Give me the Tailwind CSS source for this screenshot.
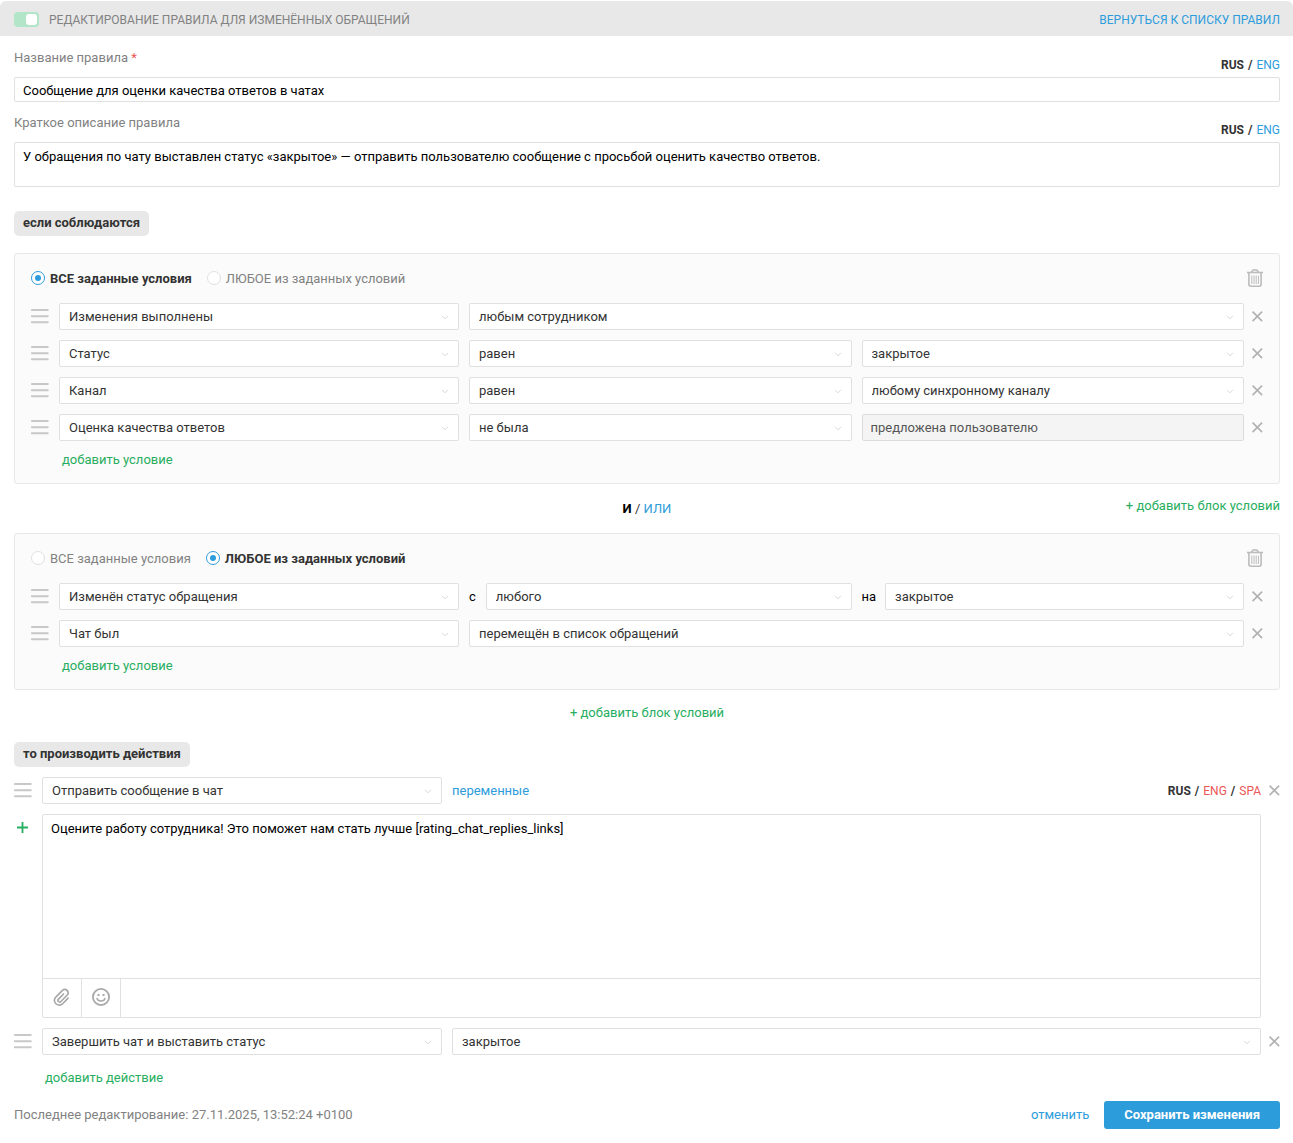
<!DOCTYPE html>
<html lang="ru">
<head>
<meta charset="utf-8">
<meta name="viewport" content="width=device-width, initial-scale=1">
<title>Редактирование правила</title>
<script src="https://cdn.jsdelivr.net/npm/@tailwindcss/browser@4"></script>
</head>
<body class="bg-white font-[Roboto,sans-serif] text-[13px] leading-5 text-[#333]">

<svg class="hidden" aria-hidden="true">
  <symbol id="drag" viewBox="0 0 18 16"><path d="M.8 2h16M.8 8.200h16M.8 14.200h16" stroke="#c8c8c8" stroke-width="1.900" stroke-linecap="round"/></symbol>
  <symbol id="chevron" viewBox="0 0 8 5"><path d="M1 .8 4 3.800 7 .8" fill="none" stroke="#d4d7dc" stroke-width="1"/></symbol>
  <symbol id="close" viewBox="0 0 11 11"><path d="M.6.600l9.500 9.500M10.100.6.6 10.100" stroke="#b3b3b3" stroke-width="1.700"/></symbol>
  <symbol id="trash" viewBox="0 0 16 18"><g fill="none" stroke="#bcbcbc"><path d="M0 3.500h16" stroke-width="1.600"/><path d="M4.800 3.200C5 1.500 6 .8 8 .8s3 .7 3.200 2.400" stroke-width="1.500"/><path d="M1.900 4v11.300q0 1.900 1.900 1.900h8.400q1.900 0 1.900-1.900V4" stroke-width="1.600"/><path d="M4.800 6.500v8.500M7 6.500v8.500M9.200 6.500v8.500M11.400 6.500v8.500" stroke-width="1"/></g></symbol>
</svg>

<header class="mt-px flex h-[35px] items-center rounded-t-md bg-[#e8e8e8] pt-[2px] pr-[13px] pl-[14px]">
  <label class="flex items-center gap-[10px] text-[12px] text-[#828282] uppercase">
    <input type="checkbox" checked class="flex h-[15px] w-[25px] appearance-none items-center rounded-[4px] bg-[#b3e6c8] px-[2px] before:size-[11px] before:rounded-[3px] before:bg-white checked:justify-end">
    Редактирование правила для изменённых обращений
  </label>
  <a href="#" class="ml-auto text-[12px] text-[#2d9cdb] uppercase">Вернуться к списку правил</a>
</header>

<form class="pr-[13px] pb-[14px] pl-[14px]">
  <div class="flex h-[41px] items-end justify-between">
    <label for="name" class="mb-[9px] text-[#828282]">Название правила <span class="text-[#eb5757]">*</span></label>
    <div class="mb-[2px] flex gap-1 text-[12px]"><b>RUS</b><b>/</b><a href="#" class="text-[#2d9cdb]">ENG</a></div>
  </div>
  <input id="name" type="text" value="Сообщение для оценки качества ответов в чатах" class="block h-[25px] w-full rounded-[2px] border border-[#e0e0e0] px-2 pt-[2px] text-black">
  <div class="flex h-10 items-end justify-between">
    <label for="about" class="mb-[9px] text-[#828282]">Краткое описание правила</label>
    <div class="mb-[2px] flex gap-1 text-[12px]"><b>RUS</b><b>/</b><a href="#" class="text-[#2d9cdb]">ENG</a></div>
  </div>
  <textarea id="about" class="block h-[45px] w-full resize-none overflow-hidden rounded-[2px] border border-[#e0e0e0] px-2 py-1 text-black">У обращения по чату выставлен статус «закрытое» — отправить пользователю сообщение с просьбой оценить качество ответов.</textarea>

  <h2 class="mt-6 flex h-[25px] w-fit items-center rounded-[5px] bg-[#e8e8e8] px-[9px] pb-[2px] font-bold">если соблюдаются</h2>

  <!-- Первый блок условий -->
  <section class="mt-[17px] rounded-[3px] border border-[#e8e8e8] bg-[#fbfbfb] px-4 pt-[15px] pb-[13px]">
    <div class="flex h-[18px] items-center gap-[15px] text-[#828282]">
      <label class="flex items-center gap-[5px] has-checked:font-bold has-checked:text-[#333]"><input type="radio" name="group1" checked class="flex size-[14px] appearance-none items-center justify-center rounded-full border border-[#e0e0e0] bg-white before:size-[6px] before:rounded-full checked:border-[#2d9cdb] checked:before:bg-[#2d9cdb]"><span class="pt-[2px]">ВСЕ заданные условия</span></label>
      <label class="flex items-center gap-[5px] has-checked:font-bold has-checked:text-[#333]"><input type="radio" name="group1" class="flex size-[14px] appearance-none items-center justify-center rounded-full border border-[#e0e0e0] bg-white before:size-[6px] before:rounded-full checked:border-[#2d9cdb] checked:before:bg-[#2d9cdb]"><span class="pt-[2px]">ЛЮБОЕ из заданных условий</span></label>
      <button type="button" aria-label="Удалить блок" class="ml-auto"><svg class="h-[18px] w-4"><use href="#trash"/></svg></button>
    </div>
    <div class="mt-4 flex flex-col gap-[10px]">
      <div class="flex items-center">
        <svg class="mr-[10px] mb-px h-4 w-[18px] shrink-0"><use href="#drag"/></svg>
        <div class="grid w-[400px] shrink-0 items-center"><select aria-label="Условие" class="col-start-1 row-start-1 h-[27px] w-full appearance-none rounded-[2px] border border-[#e0e0e0] bg-white px-[9px]"><option>Изменения выполнены</option></select><svg class="pointer-events-none col-start-1 row-start-1 mt-[2px] mr-[10px] h-[5px] w-2 justify-self-end"><use href="#chevron"/></svg></div>
        <div class="ml-[10px] grid flex-1 items-center"><select aria-label="Значение" class="col-start-1 row-start-1 h-[27px] w-full appearance-none rounded-[2px] border border-[#e0e0e0] bg-white px-[9px]"><option>любым сотрудником</option></select><svg class="pointer-events-none col-start-1 row-start-1 mt-[2px] mr-[10px] h-[5px] w-2 justify-self-end"><use href="#chevron"/></svg></div>
        <button type="button" aria-label="Удалить" class="ml-2"><svg class="size-[11px]"><use href="#close"/></svg></button>
      </div>
      <div class="flex items-center">
        <svg class="mr-[10px] mb-px h-4 w-[18px] shrink-0"><use href="#drag"/></svg>
        <div class="grid w-[400px] shrink-0 items-center"><select aria-label="Условие" class="col-start-1 row-start-1 h-[27px] w-full appearance-none rounded-[2px] border border-[#e0e0e0] bg-white px-[9px]"><option>Статус</option></select><svg class="pointer-events-none col-start-1 row-start-1 mt-[2px] mr-[10px] h-[5px] w-2 justify-self-end"><use href="#chevron"/></svg></div>
        <div class="ml-[10px] grid flex-1 items-center"><select aria-label="Сравнение" class="col-start-1 row-start-1 h-[27px] w-full appearance-none rounded-[2px] border border-[#e0e0e0] bg-white px-[9px]"><option>равен</option></select><svg class="pointer-events-none col-start-1 row-start-1 mt-[2px] mr-[10px] h-[5px] w-2 justify-self-end"><use href="#chevron"/></svg></div>
        <div class="ml-[10px] grid flex-1 items-center"><select aria-label="Значение" class="col-start-1 row-start-1 h-[27px] w-full appearance-none rounded-[2px] border border-[#e0e0e0] bg-white px-[9px]"><option>закрытое</option></select><svg class="pointer-events-none col-start-1 row-start-1 mt-[2px] mr-[10px] h-[5px] w-2 justify-self-end"><use href="#chevron"/></svg></div>
        <button type="button" aria-label="Удалить" class="ml-2"><svg class="size-[11px]"><use href="#close"/></svg></button>
      </div>
      <div class="flex items-center">
        <svg class="mr-[10px] mb-px h-4 w-[18px] shrink-0"><use href="#drag"/></svg>
        <div class="grid w-[400px] shrink-0 items-center"><select aria-label="Условие" class="col-start-1 row-start-1 h-[27px] w-full appearance-none rounded-[2px] border border-[#e0e0e0] bg-white px-[9px]"><option>Канал</option></select><svg class="pointer-events-none col-start-1 row-start-1 mt-[2px] mr-[10px] h-[5px] w-2 justify-self-end"><use href="#chevron"/></svg></div>
        <div class="ml-[10px] grid flex-1 items-center"><select aria-label="Сравнение" class="col-start-1 row-start-1 h-[27px] w-full appearance-none rounded-[2px] border border-[#e0e0e0] bg-white px-[9px]"><option>равен</option></select><svg class="pointer-events-none col-start-1 row-start-1 mt-[2px] mr-[10px] h-[5px] w-2 justify-self-end"><use href="#chevron"/></svg></div>
        <div class="ml-[10px] grid flex-1 items-center"><select aria-label="Значение" class="col-start-1 row-start-1 h-[27px] w-full appearance-none rounded-[2px] border border-[#e0e0e0] bg-white px-[9px]"><option>любому синхронному каналу</option></select><svg class="pointer-events-none col-start-1 row-start-1 mt-[2px] mr-[10px] h-[5px] w-2 justify-self-end"><use href="#chevron"/></svg></div>
        <button type="button" aria-label="Удалить" class="ml-2"><svg class="size-[11px]"><use href="#close"/></svg></button>
      </div>
      <div class="flex items-center">
        <svg class="mr-[10px] mb-px h-4 w-[18px] shrink-0"><use href="#drag"/></svg>
        <div class="grid w-[400px] shrink-0 items-center"><select aria-label="Условие" class="col-start-1 row-start-1 h-[27px] w-full appearance-none rounded-[2px] border border-[#e0e0e0] bg-white px-[9px]"><option>Оценка качества ответов</option></select><svg class="pointer-events-none col-start-1 row-start-1 mt-[2px] mr-[10px] h-[5px] w-2 justify-self-end"><use href="#chevron"/></svg></div>
        <div class="ml-[10px] grid flex-1 items-center"><select aria-label="Сравнение" class="col-start-1 row-start-1 h-[27px] w-full appearance-none rounded-[2px] border border-[#e0e0e0] bg-white px-[9px]"><option>не была</option></select><svg class="pointer-events-none col-start-1 row-start-1 mt-[2px] mr-[10px] h-[5px] w-2 justify-self-end"><use href="#chevron"/></svg></div>
        <div class="ml-[10px] flex-1"><input type="text" aria-label="Значение" disabled value="предложена пользователю" class="block h-[27px] w-full rounded-[2px] border border-[#dcdcdc] bg-[#f4f4f4] px-2 text-[#545454]"></div>
        <button type="button" aria-label="Удалить" class="ml-2"><svg class="size-[11px]"><use href="#close"/></svg></button>
      </div>
    </div>
    <button type="button" class="mt-[9px] ml-[31px] block text-[#27ae60]">добавить условие</button>
  </section>

  <div class="grid h-[49px] grid-cols-[1fr_auto_1fr] items-center">
    <div class="col-start-2"><b class="text-black">И</b> / <a href="#" class="text-[#2d9cdb]">ИЛИ</a></div>
    <button type="button" class="mb-[5px] justify-self-end text-[#27ae60]">+ добавить блок условий</button>
  </div>

  <!-- Второй блок условий -->
  <section class="rounded-[3px] border border-[#e8e8e8] bg-[#fbfbfb] px-4 pt-[15px] pb-[13px]">
    <div class="flex h-[18px] items-center gap-[15px] text-[#828282]">
      <label class="flex items-center gap-[5px] has-checked:font-bold has-checked:text-[#333]"><input type="radio" name="group2" class="flex size-[14px] appearance-none items-center justify-center rounded-full border border-[#e0e0e0] bg-white before:size-[6px] before:rounded-full checked:border-[#2d9cdb] checked:before:bg-[#2d9cdb]"><span class="pt-[2px]">ВСЕ заданные условия</span></label>
      <label class="flex items-center gap-[5px] has-checked:font-bold has-checked:text-[#333]"><input type="radio" name="group2" checked class="flex size-[14px] appearance-none items-center justify-center rounded-full border border-[#e0e0e0] bg-white before:size-[6px] before:rounded-full checked:border-[#2d9cdb] checked:before:bg-[#2d9cdb]"><span class="pt-[2px]">ЛЮБОЕ из заданных условий</span></label>
      <button type="button" aria-label="Удалить блок" class="ml-auto"><svg class="h-[18px] w-4"><use href="#trash"/></svg></button>
    </div>
    <div class="mt-4 flex flex-col gap-[10px]">
      <div class="flex items-center">
        <svg class="mr-[10px] mb-px h-4 w-[18px] shrink-0"><use href="#drag"/></svg>
        <div class="grid w-[400px] shrink-0 items-center"><select aria-label="Условие" class="col-start-1 row-start-1 h-[27px] w-full appearance-none rounded-[2px] border border-[#e0e0e0] bg-white px-[9px]"><option>Изменён статус обращения</option></select><svg class="pointer-events-none col-start-1 row-start-1 mt-[2px] mr-[10px] h-[5px] w-2 justify-self-end"><use href="#chevron"/></svg></div>
        <div class="ml-[10px] flex flex-1 items-center gap-[10px]">
          <label for="from" class="text-black">с</label>
          <div class="grid flex-1 items-center"><select id="from" class="col-start-1 row-start-1 h-[27px] w-full appearance-none rounded-[2px] border border-[#e0e0e0] bg-white px-[9px]"><option>любого</option></select><svg class="pointer-events-none col-start-1 row-start-1 mt-[2px] mr-[10px] h-[5px] w-2 justify-self-end"><use href="#chevron"/></svg></div>
        </div>
        <div class="ml-[10px] flex flex-1 items-center gap-[9px]">
          <label for="to" class="text-black">на</label>
          <div class="grid flex-1 items-center"><select id="to" class="col-start-1 row-start-1 h-[27px] w-full appearance-none rounded-[2px] border border-[#e0e0e0] bg-white px-[9px]"><option>закрытое</option></select><svg class="pointer-events-none col-start-1 row-start-1 mt-[2px] mr-[10px] h-[5px] w-2 justify-self-end"><use href="#chevron"/></svg></div>
        </div>
        <button type="button" aria-label="Удалить" class="ml-2"><svg class="size-[11px]"><use href="#close"/></svg></button>
      </div>
      <div class="flex items-center">
        <svg class="mr-[10px] mb-px h-4 w-[18px] shrink-0"><use href="#drag"/></svg>
        <div class="grid w-[400px] shrink-0 items-center"><select aria-label="Условие" class="col-start-1 row-start-1 h-[27px] w-full appearance-none rounded-[2px] border border-[#e0e0e0] bg-white px-[9px]"><option>Чат был</option></select><svg class="pointer-events-none col-start-1 row-start-1 mt-[2px] mr-[10px] h-[5px] w-2 justify-self-end"><use href="#chevron"/></svg></div>
        <div class="ml-[10px] grid flex-1 items-center"><select aria-label="Значение" class="col-start-1 row-start-1 h-[27px] w-full appearance-none rounded-[2px] border border-[#e0e0e0] bg-white px-[9px]"><option>перемещён в список обращений</option></select><svg class="pointer-events-none col-start-1 row-start-1 mt-[2px] mr-[10px] h-[5px] w-2 justify-self-end"><use href="#chevron"/></svg></div>
        <button type="button" aria-label="Удалить" class="ml-2"><svg class="size-[11px]"><use href="#close"/></svg></button>
      </div>
    </div>
    <button type="button" class="mt-[9px] ml-[31px] block text-[#27ae60]">добавить условие</button>
  </section>

  <button type="button" class="mx-auto mt-[13px] block text-[#27ae60]">+ добавить блок условий</button>

  <h2 class="mt-[19px] flex h-[25px] w-fit items-center rounded-[5px] bg-[#e8e8e8] px-[9px] pb-[2px] font-bold">то производить действия</h2>

  <!-- Действия -->
  <div class="mt-[10px] flex items-center">
    <svg class="mr-[10px] mb-px h-4 w-[18px] shrink-0"><use href="#drag"/></svg>
    <div class="grid w-[400px] shrink-0 items-center"><select aria-label="Действие" class="col-start-1 row-start-1 h-[27px] w-full appearance-none rounded-[2px] border border-[#e0e0e0] bg-white px-[9px]"><option>Отправить сообщение в чат</option></select><svg class="pointer-events-none col-start-1 row-start-1 mt-[2px] mr-[10px] h-[5px] w-2 justify-self-end"><use href="#chevron"/></svg></div>
    <a href="#" class="ml-[10px] text-[#2d9cdb]">переменные</a>
    <div class="ml-auto flex gap-1 text-[12px]"><b>RUS</b><b>/</b><a href="#" class="text-[#eb5757]">ENG</a><b>/</b><a href="#" class="text-[#eb5757]">SPA</a></div>
    <button type="button" aria-label="Удалить" class="ml-2"><svg class="size-[11px]"><use href="#close"/></svg></button>
  </div>
  <div class="mt-[10px] mr-[19px] flex items-start">
    <button type="button" aria-label="Добавить сообщение" class="mt-2 mr-[11px] flex w-[17px] justify-center"><svg class="size-[11px]" viewBox="0 0 11 11"><path d="M5.500 0v11M0 5.500h11" stroke="#27ae60" stroke-width="1.800"/></svg></button>
    <div class="flex-1 rounded-[2px] border border-[#e0e0e0]">
      <textarea aria-label="Сообщение" class="block h-[163px] w-full resize-none px-2 py-1 text-black">Оцените работу сотрудника! Это поможет нам стать лучше [rating_chat_replies_links]</textarea>
      <div class="flex h-[39px] border-t border-[#e0e0e0]">
        <button type="button" aria-label="Прикрепить файл" class="flex w-[39px] items-center justify-center border-r border-[#e0e0e0] pb-[2px]"><svg class="size-[18px]" viewBox="0 0 24 24" fill="none" stroke="#a8a8a8" stroke-width="2.200" stroke-linecap="round"><path d="M21.600 13.300l-6.900 7a6.500 6.500 0 0 1-9.600.1 6 6 0 0 1 .1-8.600l8.900-9a4.500 4.500 0 0 1 6.400 6.300l-8.800 8.900a2.300 2.300 0 0 1-3.200-3.200l7-7.100" transform="translate(-1.500 .3)"/></svg></button>
        <button type="button" aria-label="Смайлы" class="flex w-[39px] items-center justify-center border-r border-[#e0e0e0] pb-[2px]"><svg class="size-[18px]" viewBox="0 0 18 18" fill="none" stroke="#a8a8a8" stroke-width="1.800"><circle cx="9" cy="9" r="8.100"/><path d="M5 10.500c1 3.300 7 3.300 8 0" stroke-width="1.500" stroke-linecap="round"/><path d="M5.500 6.900h2M10.500 6.900h2" stroke-width="2"/></svg></button>
      </div>
    </div>
  </div>
  <div class="mt-[10px] flex items-center">
    <svg class="mr-[10px] mb-px h-4 w-[18px] shrink-0"><use href="#drag"/></svg>
    <div class="grid w-[400px] shrink-0 items-center"><select aria-label="Действие" class="col-start-1 row-start-1 h-[27px] w-full appearance-none rounded-[2px] border border-[#e0e0e0] bg-white px-[9px]"><option>Завершить чат и выставить статус</option></select><svg class="pointer-events-none col-start-1 row-start-1 mt-[2px] mr-[10px] h-[5px] w-2 justify-self-end"><use href="#chevron"/></svg></div>
    <div class="ml-[10px] grid flex-1 items-center"><select aria-label="Статус" class="col-start-1 row-start-1 h-[27px] w-full appearance-none rounded-[2px] border border-[#e0e0e0] bg-white px-[9px]"><option>закрытое</option></select><svg class="pointer-events-none col-start-1 row-start-1 mt-[2px] mr-[10px] h-[5px] w-2 justify-self-end"><use href="#chevron"/></svg></div>
    <button type="button" aria-label="Удалить" class="ml-2"><svg class="size-[11px]"><use href="#close"/></svg></button>
  </div>
  <button type="button" class="mt-[13px] ml-[31px] block text-[#27ae60]">добавить действие</button>

  <footer class="mt-[13px] flex items-center">
    <p class="text-[#828282]">Последнее редактирование: 27.11.2025, 13:52:24 +0100</p>
    <a href="#" class="ml-auto text-[#2d9cdb]">отменить</a>
    <button type="submit" class="ml-[15px] h-7 rounded-[3px] bg-[#2d9cdb] px-5 font-bold text-white">Сохранить изменения</button>
  </footer>
</form>
</body>
</html>
